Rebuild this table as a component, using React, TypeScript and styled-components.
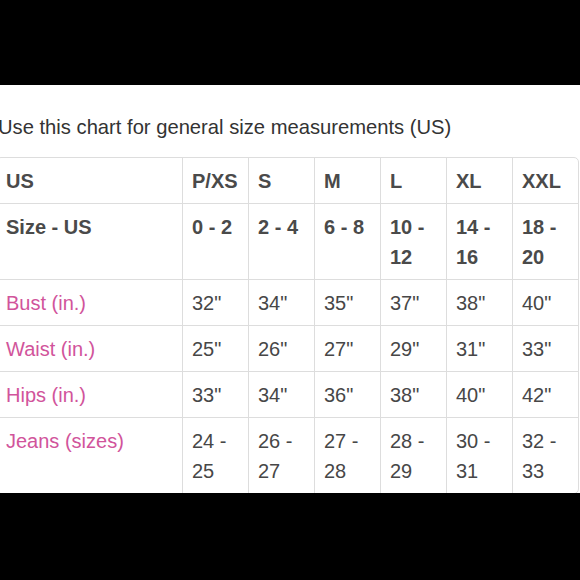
import styled, { createGlobalStyle } from "styled-components";

const GlobalStyle = createGlobalStyle`
    html, body {
        margin: 0;
        padding: 0;
        background: #000;
    }
    body {
        font-family: "Liberation Sans", Arial, sans-serif;
    }
`;

const Frame = styled.div`
    width: 580px;
    height: 580px;
    display: flex;
    flex-direction: column;
    background: #000;
    overflow: hidden;
`;

const Bar = styled.div<{ $h: number }>`
    height: ${props => props.$h}px;
    flex-shrink: 0;
    background: #000;
`;

const Sheet = styled.div`
    height: 408px;
    flex-shrink: 0;
    background: #fff;
    overflow: hidden;
`;

const Intro = styled.p`
    margin: 31px 0 0 -2px;
    height: 41px;
    font-size: 20.2px;
    line-height: 23px;
    color: #333;
    white-space: nowrap;
`;

const Chart = styled.table`
    margin-left: -4px;
    width: 583px;
    border-collapse: separate;
    border-spacing: 0;
    border: 1px solid #ddd;
    border-radius: 5px;
    font-size: 20px;
    line-height: 30px;
`;

const Cell = styled.td<{ $bold?: boolean; $pink?: boolean }>`
    padding: 8px 6px 7px 9px;
    vertical-align: top;
    text-align: left;
    border-left: 1px solid #ddd;
    border-top: 1px solid #ddd;
    width: 50px;
    font-weight: ${props => (props.$bold ? 700 : 400)};
    color: ${props => (props.$pink ? "#d1549b" : props.$bold ? "#4a4a4a" : "#474747")};
    tr:first-child > & {
        border-top: none;
    }
    &:first-child {
        border-left: none;
        width: auto;
    }
`;

interface IRow {
    label: string;
    head?: boolean;
    values: string[];
}

const rows: IRow[] = [
    { label: "US", head: true, values: ["P/XS", "S", "M", "L", "XL", "XXL"] },
    { label: "Size - US", head: true, values: ["0 - 2", "2 - 4", "6 - 8", "10 - 12", "14 - 16", "18 - 20"] },
    { label: "Bust (in.)", values: ['32"', '34"', '35"', '37"', '38"', '40"'] },
    { label: "Waist (in.)", values: ['25"', '26"', '27"', '29"', '31"', '33"'] },
    { label: "Hips (in.)", values: ['33"', '34"', '36"', '38"', '40"', '42"'] },
    { label: "Jeans (sizes)", values: ["24 - 25", "26 - 27", "27 - 28", "28 - 29", "30 - 31", "32 - 33"] },
];

function App() {
    return (
        <Frame>
            <GlobalStyle />
            <Bar $h={85} />
            <Sheet>
                <Intro>Use this chart for general size measurements (US)</Intro>
                <Chart>
                    <tbody>
                        {rows.map(row => (
                            <tr key={row.label}>
                                <Cell $bold={row.head} $pink={!row.head}>{row.label}</Cell>
                                {row.values.map((v, i) => (
                                    <Cell key={i} $bold={row.head}>{v}</Cell>
                                ))}
                            </tr>
                        ))}
                    </tbody>
                </Chart>
            </Sheet>
            <Bar $h={87} />
        </Frame>
    );
}

export default App;
